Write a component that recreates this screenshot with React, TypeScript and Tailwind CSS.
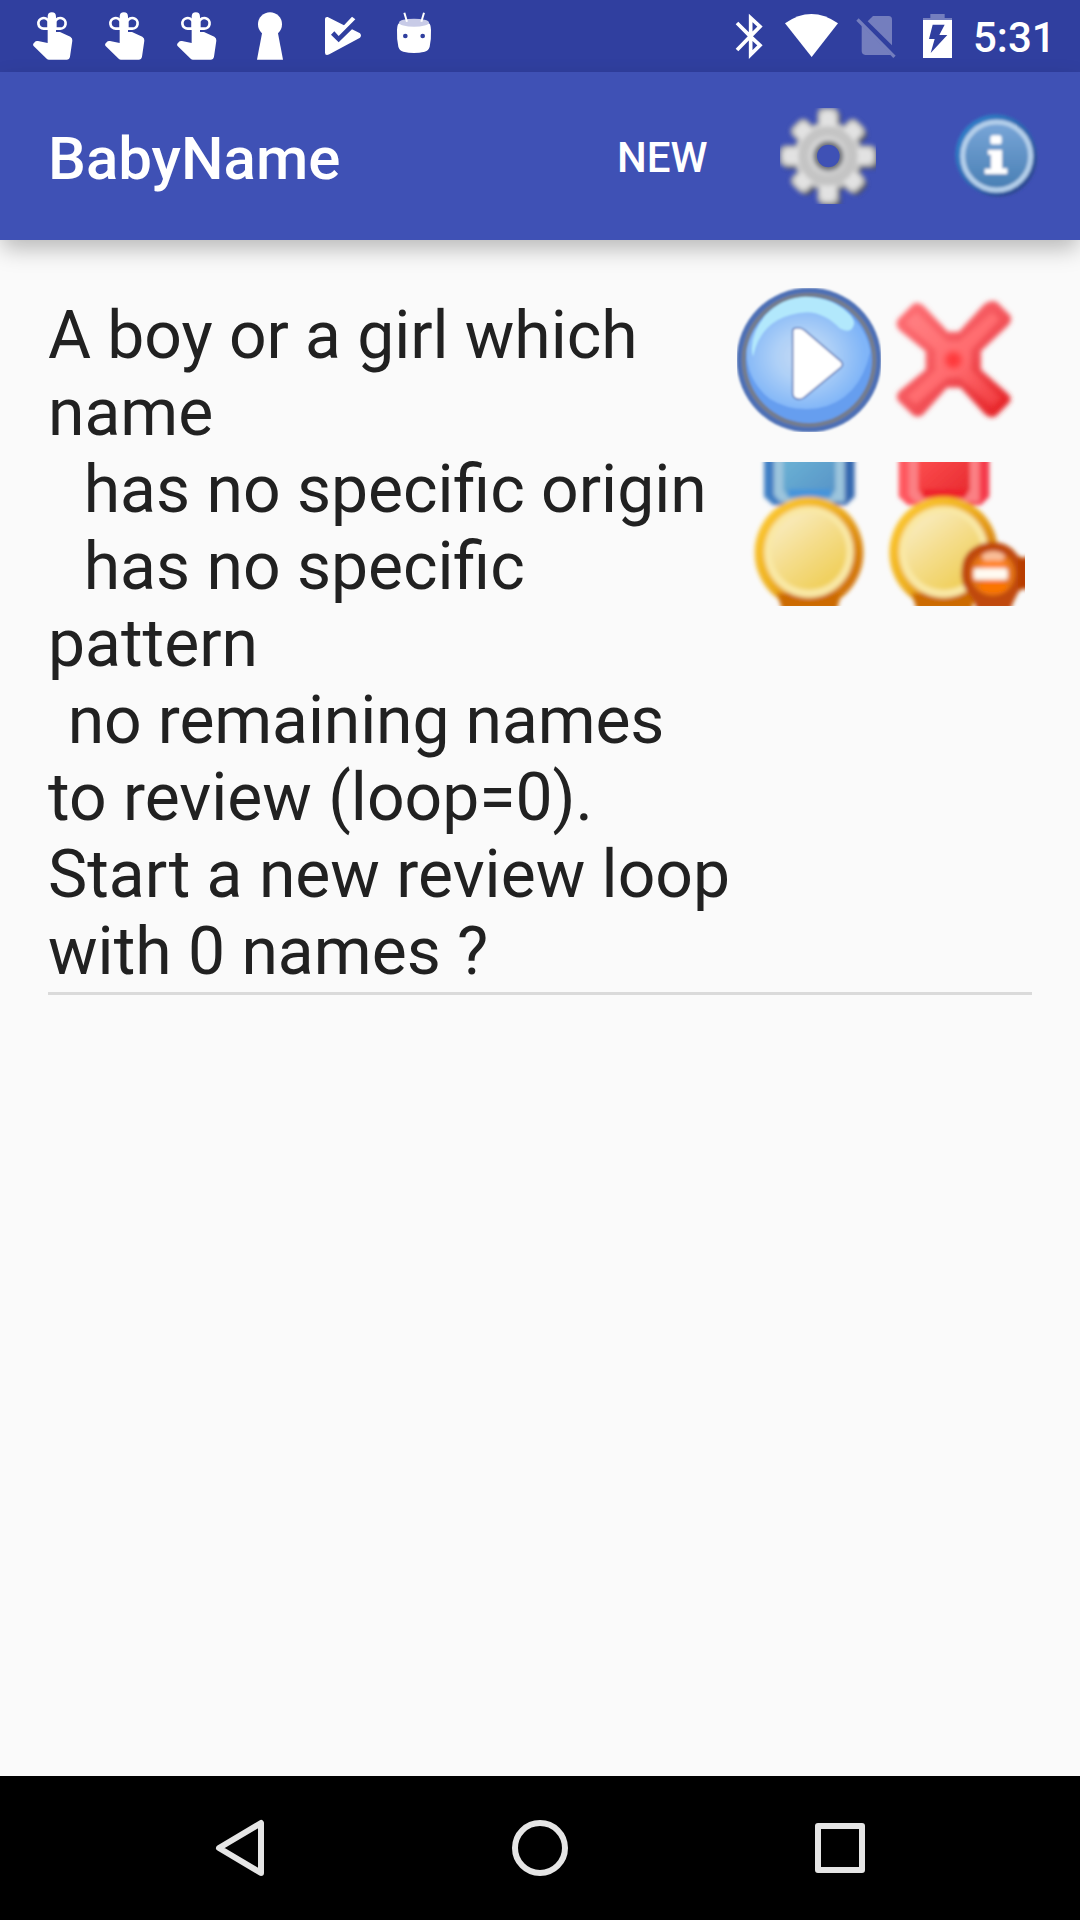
import React from "react";

function ReminderIcon() {
  return (
    <svg className="h-[72px] w-[72px] shrink-0" viewBox="48 0 216 216" fill="#fff">
      <path d="M143 50Q143 37 155.500 37Q168 37 168 50V96H180L211 110Q218 114 217 122L210 170Q208 179 200 179H147Q143 179 140 176L100 137Q98 133 101 130L107 124Q110 122 114 123L143 129Z" />
      <path d="M146 86H131A16 16 0 1 1 146 64V86ZM166 86H180A16 16 0 1 0 166 64V86Z" fill="none" stroke="#fff" strokeWidth="8" />
    </svg>
  );
}

function KeyholeIcon() {
  return (
    <svg className="h-[72px] w-[72px] shrink-0" viewBox="6 0 216 216" fill="#fff">
      <circle cx="120" cy="73" r="36" />
      <path d="M98 92H142L144 100L159 179H81L96 100Z" />
    </svg>
  );
}

function PlayCheckIcon() {
  return (
    <svg className="h-[72px] w-[72px] shrink-0" viewBox="222 0 216 216" fill="#fff">
      <path d="M285 57Q285 50 293 51L342 76L366 50L376 58L326 108L313 94L303 104L326 127L366 88L390 100Q396 107 390 113L298 163Q285 168 285 158Z" />
    </svg>
  );
}

function DroidIcon() {
  return (
    <svg className="h-[72px] w-[72px] shrink-0" viewBox="438 0 216 216" fill="#fff">
      <path d="M507 70H597Q602 72 603 90Q604 118 599 140Q596 152 584 155Q552 163 520 155Q508 152 505 140Q500 118 501 90Q502 72 507 70Z" />
      <ellipse cx="552" cy="68" rx="45" ry="12" fill="#c8cbe7" />
      <path d="M523 38L531 65M582 38L574 65" stroke="#fff" strokeWidth="6" />
      <circle cx="526" cy="108" r="7" fill="#303f9f" />
      <circle cx="578" cy="108" r="7" fill="#303f9f" />
    </svg>
  );
}

function BluetoothIcon() {
  return (
    <svg className="h-[72px] w-[60px] shrink-0" viewBox="30 0 180 216" fill="none">
      <path d="M81 69L121 109L81 150M121 109L150 80L122 54V164L150 136Z" stroke="#fff" strokeWidth="11" />
    </svg>
  );
}

function WifiIcon() {
  return (
    <svg className="h-[72px] w-[68px] shrink-0" viewBox="210 0 204 216">
      <path d="M225 70Q304 14 384 70L305 171Z" fill="#fff" />
    </svg>
  );
}

function NoSimIcon() {
  return (
    <svg className="h-[72px] w-[60px] shrink-0" viewBox="414 0 180 216" fill="#747ebe">
      <path d="M473 64L489 48H536Q546 49 546 58V136Z" />
      <path d="M455 76L543 164Q540 165 535 165H466Q455 164 455 153Z" />
      <path d="M439 62L446 55L557 167L550 174Z" />
    </svg>
  );
}

function BatteryIcon() {
  return (
    <svg className="h-[72px] w-[60px] shrink-0" viewBox="594 0 180 216">
      <path d="M661 42H704V54H726V61H639V54H661Z" fill="#747ebe" />
      <path d="M639 60H726V174H639Z" fill="#fff" />
      <path d="M668 74H704L688 105H712L662 159L674 117H657Z" fill="#303f9f" />
    </svg>
  );
}

const TOOTH_ANGLES = [0, 45, 90, 135, 180, 225, 270, 315];

function GearIcon() {
  return (
    <svg className="h-24 w-24 shrink-0" viewBox="540 54 288 288">
      <defs>
        <filter id="gearBlur" x="-10%" y="-10%" width="120%" height="120%">
          <feGaussianBlur stdDeviation="6" />
        </filter>
        <linearGradient id="gearFill" x1="0" y1="0" x2="1" y2="1">
          <stop offset="0" stopColor="#dedede" />
          <stop offset="1" stopColor="#c6c6c6" />
        </linearGradient>
        <mask id="gearHole">
          <rect x="500" y="20" width="360" height="360" fill="#fff" />
          <circle cx="685" cy="198" r="34" fill="#000" />
        </mask>
      </defs>
      <g filter="url(#gearBlur)" mask="url(#gearHole)">
        <g fill="#4c4e55" transform="translate(9 9)">
          <circle cx="684" cy="198" r="98" />
          {TOOTH_ANGLES.map((a) => (
            <rect key={a} x="655" y={a % 90 ? 64 : 52} width="58" height="80" rx="18" transform={`rotate(${a} 684 198)`} />
          ))}
        </g>
        <g fill="#b0b0b0">
          <circle cx="684" cy="198" r="104" />
          {TOOTH_ANGLES.map((a) => (
            <rect key={a} x="651" y={a % 90 ? 60 : 52} width="66" height="80" rx="20" transform={`rotate(${a} 684 198)`} />
          ))}
        </g>
        <g fill="url(#gearFill)">
          <circle cx="684" cy="198" r="97" />
          {TOOTH_ANGLES.map((a) => (
            <rect key={a} x="661" y={a % 90 ? 70 : 63} width="46" height="70" rx="16" fill="#e2e2e2" transform={`rotate(${a} 684 198)`} />
          ))}
        </g>
        <circle cx="684" cy="198" r="74" fill="none" stroke="#c4c4c4" strokeWidth="30" />
        <circle cx="685" cy="198" r="45" fill="#707279" />
      </g>
    </svg>
  );
}

function InfoIcon() {
  return (
    <svg className="h-24 w-24 shrink-0" viewBox="1044 54 288 288">
      <defs>
        <filter id="infoBlur" x="-20%" y="-20%" width="140%" height="140%">
          <feGaussianBlur stdDeviation="5.500" />
        </filter>
        <linearGradient id="infoFill" x1="0" y1="0" x2="0" y2="1">
          <stop offset="0" stopColor="#79a6d8" />
          <stop offset="1" stopColor="#477eb3" />
        </linearGradient>
        <linearGradient id="infoRim" x1="0" y1="0" x2="1" y2="0.800">
          <stop offset="0" stopColor="#2f86d0" />
          <stop offset="1" stopColor="#2a5599" />
        </linearGradient>
      </defs>
      <g filter="url(#infoBlur)">
        <circle cx="1194" cy="203" r="117" fill="#2d458f" />
        <circle cx="1187" cy="194" r="121" fill="url(#infoRim)" />
        <circle cx="1190" cy="198" r="102" fill="url(#infoFill)" stroke="#b4cfea" strokeWidth="15" />
        <rect x="1171" y="136" width="34" height="27" rx="8" fill="#fff" />
        <path d="M1164 180H1206V235H1222V252H1154V236H1173V194H1164Z" fill="#fff" />
      </g>
    </svg>
  );
}

function PlayIcon() {
  return (
    <svg className="h-36 w-36 shrink-0" viewBox="51 54 432 432">
      <defs>
        <filter id="playBlur" x="-10%" y="-10%" width="120%" height="120%">
          <feGaussianBlur stdDeviation="2.800" />
        </filter>
        <radialGradient id="playFill" cx="0.460" cy="0.520" r="0.500">
          <stop offset="0" stopColor="#c6daf5" />
          <stop offset="0.450" stopColor="#aed0f7" />
          <stop offset="1" stopColor="#80b5f8" />
        </radialGradient>
      </defs>
      <g filter="url(#playBlur)">
        <circle cx="267" cy="270" r="217" fill="#4e70b5" />
        <circle cx="267" cy="270" r="202" fill="#757d8e" />
        <circle cx="267" cy="270" r="189" fill="#669eef" />
        <path d="M80 240Q78 330 150 387Q210 425 292 415Q420 390 450 245A188 188 0 0 0 80 240Z" fill="url(#playFill)" />
        <path d="M99 260Q84 205 136 136Q186 82 257 80Q342 82 393 137Q410 160 395 177Q383 188 359 175Q314 128 261 127Q125 135 99 260Z" fill="#b2e8fc" />
        <path d="M218 184Q218 174 229 174H239Q247 175 255 182L363 274Q372 284 363 292L252 383Q237 393 223 383Q218 379 218 370Z" fill="#fff" stroke="#6880ba" strokeWidth="5" />
      </g>
    </svg>
  );
}

function CrossIcon() {
  return (
    <svg className="h-36 w-36 shrink-0" viewBox="483 54 432 432">
      <defs>
        <filter id="crossBlur" x="-10%" y="-10%" width="120%" height="120%">
          <feGaussianBlur stdDeviation="8" />
        </filter>
        <linearGradient id="crossEdge" gradientUnits="userSpaceOnUse" x1="533" y1="97" x2="875" y2="440">
          <stop offset="0" stopColor="#ff7075" />
          <stop offset="0.500" stopColor="#f4565c" />
          <stop offset="1" stopColor="#e41c20" />
        </linearGradient>
        <linearGradient id="crossInner" gradientUnits="userSpaceOnUse" x1="533" y1="97" x2="875" y2="440">
          <stop offset="0" stopColor="#ff8487" />
          <stop offset="0.550" stopColor="#ff6a6d" />
          <stop offset="1" stopColor="#ec2c30" />
        </linearGradient>
        <radialGradient id="crossCore">
          <stop offset="0" stopColor="#ff3538" />
          <stop offset="0.500" stopColor="#ff4043" />
          <stop offset="1" stopColor="#ff6568" stopOpacity="0" />
        </radialGradient>
      </defs>
      <g filter="url(#crossBlur)">
        <path d="M536 150L582 104Q597 98 612 113L682 188H718L794 106Q812 92 828 98L868 138Q874 152 862 164L780 242V300L860 372Q876 386 864 398L826 436Q810 444 794 428L722 350H680L612 426Q598 442 582 434L538 392Q528 380 540 366L620 300V243L540 178Q528 164 536 150Z" fill="url(#crossEdge)" stroke="url(#crossEdge)" strokeWidth="6" />
        <path d="M562 151L590 128L682 215H718L815 128L838 148L752 240V300L842 384L816 408L718 322H682L588 402L562 380L647 300V240L562 165Z" fill="url(#crossInner)" />
        <circle cx="700" cy="270" r="38" fill="url(#crossCore)" />
      </g>
    </svg>
  );
}

type MedalProps = {
  id: string;
  shift: number;
  edgeLeft: string;
  edgeRight: string;
  stripe: string;
  bandStart: string;
  bandEnd: string;
  bandFoot: string;
  children?: React.ReactNode;
};

function MedalIcon({ id, shift, edgeLeft, edgeRight, stripe, bandStart, bandEnd, bandFoot, children }: MedalProps) {
  return (
    <svg className="h-36 w-36 shrink-0" viewBox="51 66 432 432">
      <defs>
        <filter id={`${id}Blur`} x="-20%" y="-20%" width="140%" height="140%">
          <feGaussianBlur stdDeviation="6.500" />
        </filter>
        <linearGradient id={`${id}Edge`} x1="0" y1="0" x2="1" y2="0">
          <stop offset="0" stopColor={edgeLeft} />
          <stop offset="1" stopColor={edgeRight} />
        </linearGradient>
        <linearGradient id={`${id}Band`} x1="0" y1="0" x2="1" y2="1">
          <stop offset="0" stopColor={bandStart} />
          <stop offset="1" stopColor={bandEnd} />
        </linearGradient>
        <linearGradient id={`${id}Rim`} x1="0" y1="0" x2="1" y2="0.900">
          <stop offset="0" stopColor="#ffcc35" />
          <stop offset="0.450" stopColor="#efb323" />
          <stop offset="1" stopColor="#c96200" />
        </linearGradient>
        <linearGradient id={`${id}Gold`} x1="0.100" y1="0" x2="0.850" y2="1">
          <stop offset="0" stopColor="#faedc5" />
          <stop offset="0.500" stopColor="#f4dc88" />
          <stop offset="1" stopColor="#efcc50" />
        </linearGradient>
      </defs>
      <g filter={`url(#${id}Blur)`}>
        <g transform={`translate(${shift} 0)`}>
          <path d="M132 30H404V170L378 196H160L132 170Z" fill={`url(#${id}Edge)`} />
          <path d="M162 30H374V185H180L162 165Z" fill={stripe} />
          <path d="M190 30H346V150L330 175H206L190 150Z" fill={`url(#${id}Band)`} />
          <rect x="205" y="148" width="128" height="22" fill={bandFoot} />
          <ellipse cx="267" cy="338" rx="163" ry="168" fill={`url(#${id}Rim)`} />
          <path d="M170 460H365L350 510H187Z" fill="#cc6a04" />
          <ellipse cx="267" cy="336" rx="134" ry="137" fill="#f9e8a5" />
          <ellipse cx="267" cy="334" rx="113" ry="116" fill={`url(#${id}Gold)`} />
        </g>
        {children}
      </g>
    </svg>
  );
}

function RemoveBadge() {
  return (
    <g>
      <path d="M388 306Q436 308 458 342Q474 362 500 345V452Q474 440 462 458Q448 484 438 510H338Q334 484 312 458Q292 438 292 400Q292 350 322 328Q350 306 388 306Z" fill="#c04808" />
      <rect x="462" y="356" width="40" height="88" fill="#b83c00" />
      <circle cx="386" cy="400" r="67" fill="#e47414" />
      <ellipse cx="388" cy="350" rx="34" ry="16" fill="#f9bd98" />
      <ellipse cx="388" cy="373" rx="44" ry="12" fill="#ff8428" />
      <rect x="329" y="385" width="102" height="34" rx="8" fill="#fffaf2" />
      <ellipse cx="388" cy="440" rx="42" ry="20" fill="#fa7400" />
    </g>
  );
}

function StatusBar() {
  return (
    <div className="flex h-[72px] justify-between bg-[#303f9f] pl-4">
      <div className="flex">
        <ReminderIcon />
        <ReminderIcon />
        <ReminderIcon />
        <KeyholeIcon />
        <PlayCheckIcon />
        <DroidIcon />
      </div>
      <div className="flex w-[360px]">
        <BluetoothIcon />
        <WifiIcon />
        <NoSimIcon />
        <BatteryIcon />
        <span className="pt-[13px] pl-[5px] text-[42px] leading-[50px] font-medium text-white">5:31</span>
      </div>
    </div>
  );
}

function AppBar() {
  return (
    <header className="relative flex h-[168px] items-center bg-[#3f51b5] pl-12 text-white shadow-[0_10px_22px_-2px_rgba(0,0,0,0.28)]">
      <h1 className="flex-1 pt-1.5 text-[60px] leading-[72px] font-medium">BabyName</h1>
      <button className="w-[164px] pt-1 pl-px text-left text-[42px] leading-[50px] font-medium">NEW</button>
      <div className="flex w-[300px] gap-[72px]">
        <GearIcon />
        <InfoIcon />
      </div>
    </header>
  );
}

function ReviewItem() {
  return (
    <section className="mx-12 mt-12 flex h-[707px] border-b-[3px] border-[#dadada]">
      <div className="w-[689px] pt-[9px] text-[66px] leading-[77px] whitespace-pre text-[#212121]">
        <p className="tracking-[-0.06px]">{"A boy or a girl which"}</p>
        <p>{"name"}</p>
        <p className="pl-[3px]">{"  has no specific origin"}</p>
        <p className="pl-[3px]">{"  has no specific"}</p>
        <p>{"pattern"}</p>
        <p className="pl-[3.500px] tracking-[-0.120px]">{" no remaining names"}</p>
        <p>{"to review (loop=0)."}</p>
        <p>{"Start a new review loop"}</p>
        <p>{"with 0 names ?"}</p>
      </div>
      <div className="grid grid-cols-2 content-start gap-y-[30px]">
        <PlayIcon />
        <CrossIcon />
        <MedalIcon
          id="blueMedal"
          shift={0}
          edgeLeft="#4180c5"
          edgeRight="#3566ae"
          stripe="#9cc5dd"
          bandStart="#6db5d6"
          bandEnd="#5692c6"
          bandFoot="#4594dc"
        />
        <MedalIcon
          id="redMedal"
          shift={-28}
          edgeLeft="#ff5a61"
          edgeRight="#f4394a"
          stripe="#fb8084"
          bandStart="#ff5152"
          bandEnd="#e6292e"
          bandFoot="#ee202c"
        >
          <RemoveBadge />
        </MedalIcon>
      </div>
    </section>
  );
}

function NavigationBar() {
  return (
    <nav className="flex h-36 items-center justify-center gap-[204px] bg-black">
      <svg className="h-24 w-24" viewBox="0 0 96 96" fill="none" stroke="#e5e5e5" strokeWidth="6" strokeLinejoin="round">
        <path d="M69 23V73L27 48Z" />
      </svg>
      <svg className="h-24 w-24" viewBox="0 0 96 96" fill="none" stroke="#e5e5e5" strokeWidth="6">
        <circle cx="48" cy="48" r="25" />
      </svg>
      <svg className="h-24 w-24" viewBox="0 0 96 96" fill="none" stroke="#e5e5e5" strokeWidth="6" strokeLinejoin="round">
        <rect x="26" y="26" width="44" height="44" />
      </svg>
    </nav>
  );
}

export default function App() {
  return (
    <div className="flex h-[1920px] w-[1080px] flex-col overflow-hidden bg-[#fafafa] font-[Roboto,sans-serif]">
      <StatusBar />
      <AppBar />
      <main className="flex-1">
        <ReviewItem />
      </main>
      <NavigationBar />
    </div>
  );
}
